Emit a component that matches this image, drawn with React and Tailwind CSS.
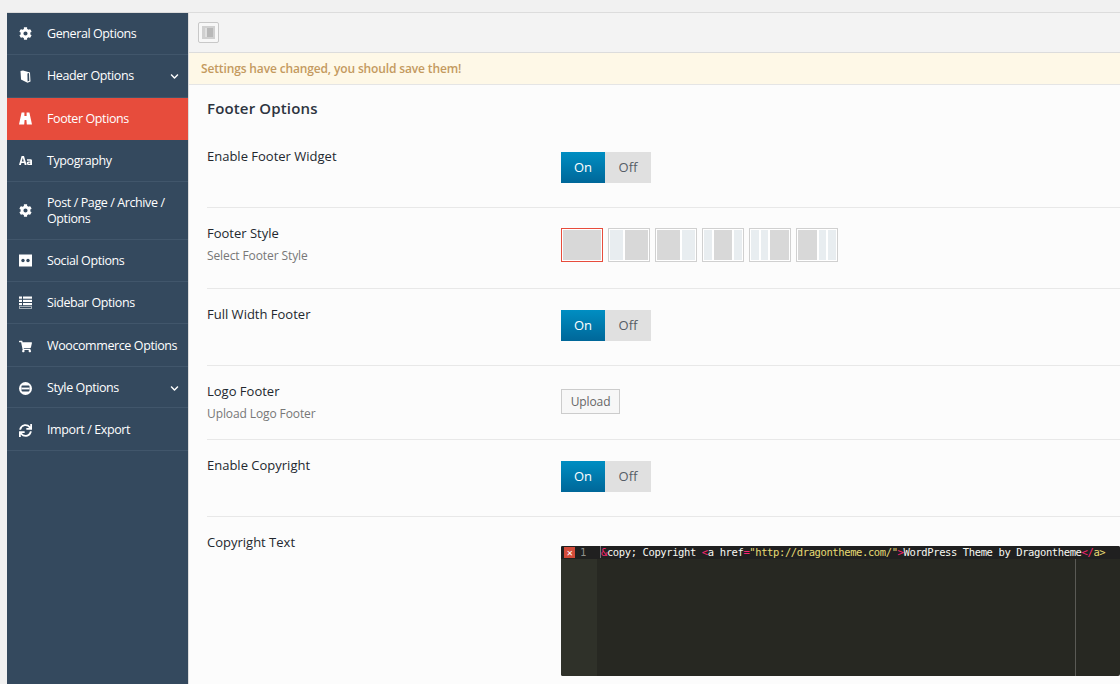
import React from 'react';
import { FaCog, FaShoppingCart, FaSync, FaChevronDown } from 'react-icons/fa';

const BookIcon = ({ className }) => (
    <svg viewBox="0 0 13 13" className={className} fill="currentColor">
        <path d="M1.5 1 L4 0.5 L11 2.5 L11.5 11.5 L8.5 12.8 L2 9.5 Z" />
        <path d="M8.4 3.6 L10 3.1 L10.3 10.8 L8.6 11.5 Z" fill="#34495e" />
    </svg>
);

const BinocularsIcon = ({ className }) => (
    <svg viewBox="0 0 13 13" className={className} fill="currentColor">
        <path d="M2.6 0.5 H5.4 V4 H7.6 V0.5 H10.4 L13 12.5 H7.8 L7.4 8 H5.6 L5.2 12.5 H0 Z" />
    </svg>
);

const TextSizeIcon = ({ className }) => (
    <svg viewBox="0 0 13 13" className={className} fill="currentColor">
        <path d="M2.6 2 H5 L7.6 11 H5.7 L5.2 9 H2.4 L1.9 11 H0 Z M2.8 7.4 H4.8 L3.8 3.8 Z" />
        <path fillRule="evenodd" d="M8 5.2 H11.6 Q13 5.2 13 6.6 V11 H9.4 Q7.6 11 7.6 9.3 Q7.6 7.6 9.4 7.6 H11.2 V6.8 H8 Z M9.4 9.2 Q9.4 9.8 10 9.8 H11.2 V8.8 H10 Q9.4 8.8 9.4 9.2 Z" />
    </svg>
);

const SocialIcon = ({ className }) => (
    <svg viewBox="0 0 13 13" className={className}>
        <rect x="0" y="0.5" width="13" height="12" fill="#fff" />
        <circle cx="4" cy="6.5" r="1.7" fill="#34495e" />
        <circle cx="9" cy="6.5" r="1.7" fill="#34495e" />
    </svg>
);

const ListIcon = ({ className }) => (
    <svg viewBox="0 0 13 13" className={className} fill="currentColor">
        <rect x="0" y="0.5" width="3" height="2.2" />
        <rect x="4" y="0.5" width="9" height="2.2" />
        <rect x="0" y="3.8" width="3" height="2.2" />
        <rect x="4" y="3.8" width="9" height="2.2" />
        <rect x="0" y="7" width="3" height="2.2" />
        <rect x="4" y="7" width="9" height="2.2" />
        <rect x="0.5" y="10.5" width="12" height="2" fill="none" stroke="#fff" strokeOpacity="0.55" />
    </svg>
);

const RingIcon = ({ className }) => (
    <svg viewBox="0 0 13 13" className={className}>
        <circle cx="6.5" cy="6.5" r="6.5" fill="#fff" />
        <rect x="2.5" y="3.6" width="8" height="5.8" rx="0.8" fill="#34495e" />
        <rect x="2.5" y="5.6" width="8" height="1.8" fill="#fff" />
    </svg>
);

const menu = [
    { label: 'General Options', icon: FaCog, row: 'h-[42px]' },
    { label: 'Header Options', icon: BookIcon, arrow: true, row: 'h-[43px]' },
    { label: 'Footer Options', icon: BinocularsIcon, active: true, row: 'h-[42px]' },
    { label: 'Typography', icon: TextSizeIcon, row: 'h-[42px]' },
    { label: 'Post / Page / Archive / Options', icon: FaCog, row: 'h-[58px]' },
    { label: 'Social Options', icon: SocialIcon, row: 'h-[42px]' },
    { label: 'Sidebar Options', icon: ListIcon, row: 'h-[42px]' },
    { label: 'Woocommerce Options', icon: FaShoppingCart, row: 'h-[43px] pt-[2px]' },
    { label: 'Style Options', icon: RingIcon, arrow: true, row: 'h-[41px] pt-[2px]' },
    { label: 'Import / Export', icon: FaSync, row: 'h-[43px] pt-[2px]' },
];

const Toggle = () => (
    <div className="flex w-[90px] h-[31px] text-[13px] leading-[31px] text-center">
        <div className="w-[44px] text-white bg-gradient-to-b from-[#008ec2] to-[#006799]">On</div>
        <div className="w-[46px] text-[#555d66] bg-[#e0e0e0]">Off</div>
    </div>
);

const titleClass = 'text-[13px] leading-[18px] font-medium text-[#23282f]';

const Row = ({ title, desc, h, children }) => (
    <div className={`flex border-b border-[#e8e8e8] pt-[16px] ${h}`}>
        <div className="w-[354px] shrink-0">
            <div className={titleClass}>{title}</div>
            {desc && <div className="text-[12px] leading-[18px] mt-[5px] tracking-[-0.1px] text-[#777]">{desc}</div>}
        </div>
        <div>{children}</div>
    </div>
);

// column widths of each footer layout thumbnail, big: the dark main column
const layouts = [
    [{ w: 'w-[38px]', big: true }],
    [{ w: 'w-[13px]' }, { w: 'w-[23px]', big: true }],
    [{ w: 'w-[23px]', big: true }, { w: 'w-[13px]' }],
    [{ w: 'w-[8px]' }, { w: 'w-[18px]', big: true }, { w: 'w-[8px]' }],
    [{ w: 'w-[8px]' }, { w: 'w-[7px]' }, { w: 'w-[19px]', big: true }],
    [{ w: 'w-[19px]', big: true }, { w: 'w-[7px]' }, { w: 'w-[8px]' }],
];

const LayoutPicker = () => (
    <div className="flex gap-[5px]">
        {layouts.map((cols, i) => (
            <div
                key={i}
                className={`w-[42px] h-[34px] border p-[1px] flex gap-[2px] bg-white ${i === 0 ? 'border-[#e74c3c]' : 'border-[#d0d0d0]'}`}
            >
                {cols.map((c, j) => (
                    <div key={j} className={`${c.w} ${c.big ? 'bg-[#d8d8d8]' : 'bg-[#e8edf0]'}`} />
                ))}
            </div>
        ))}
    </div>
);

const App = () => {
    return (
        <div className="h-[684px] overflow-hidden bg-[#f1f1f1] pl-[7px] pt-[12px] font-['Open_Sans','Noto_Sans',sans-serif]">
            <div className="flex h-[672px] border-t border-[#dcdcdc]">
                {/* Sidebar */}
                <div className="w-[181px] shrink-0 bg-[#34495e] text-[12.5px] tracking-[-0.4px] text-white">
                    {menu.map((item) => (
                        <div
                            key={item.label}
                            className={`flex items-center border-b pl-[12px] pr-[9px] ${item.row} ${item.active ? 'bg-[#e74c3c] border-[#e74c3c]' : 'border-[#41566b]'}`}
                        >
                            <span className="w-[28px] shrink-0 flex">
                                <item.icon className="w-[13px] h-[13px]" />
                            </span>
                            <span className="leading-[16px] flex-1">{item.label}</span>
                            {item.arrow && <FaChevronDown className="w-[9px] h-[9px]" />}
                        </div>
                    ))}
                </div>

                {/* Main */}
                <div className="flex-1 min-w-0 border-l border-[#dcdcdc] bg-[#fcfcfc]">
                    <div className="h-[40px] bg-[#f3f3f3] border-b border-[#dcdcdc] flex items-center pl-[9px]">
                        <div className="w-[21px] h-[21px] rounded-[2px] border border-[#c8c8c8] bg-[#f7f7f7] flex items-center justify-center">
                            <div className="w-[13px] h-[13px] bg-[#d0d0d0] flex items-center justify-center">
                                <div className="w-[8px] h-[9px] bg-[#b8b8b8] border-l-2 border-[#e0e0e0]" />
                            </div>
                        </div>
                    </div>
                    <div className="h-[32px] bg-[#fef8e7] border-b border-[#e5e5e5] pl-[12px] text-[12px] leading-[31px] tracking-[-0.14px] font-semibold text-[#c49a5f]">
                        Settings have changed, you should save them!
                    </div>
                    <div className="pl-[18px]">
                        <h2 className="pt-[13px] h-[46px] text-[15px] leading-[20px] tracking-[0.15px] font-semibold text-[#2d3440]">Footer Options</h2>
                        <Row title="Enable Footer Widget" h="h-[77px]"><div className="pt-[5px]"><Toggle /></div></Row>
                        <Row title="Footer Style" desc="Select Footer Style" h="h-[81px]"><div className="pt-[4px]"><LayoutPicker /></div></Row>
                        <Row title="Full Width Footer" h="h-[77px]"><div className="pt-[5px]"><Toggle /></div></Row>
                        <Row title="Logo Footer" desc="Upload Logo Footer" h="h-[74px]">
                            <div className="pt-[7px]">
                                <div className="w-[59px] h-[25px] border border-[#ccc] bg-[#f7f7f7] text-[12px] tracking-[-0.1px] leading-[23px] text-center text-[#666]">Upload</div>
                            </div>
                        </Row>
                        <Row title="Enable Copyright" h="h-[77px]"><div className="pt-[5px]"><Toggle /></div></Row>
                        <div className="flex pt-[16px]">
                            <div className={`w-[354px] shrink-0 ${titleClass}`}>Copyright Text</div>
                            <div className="flex-1 min-w-0 mt-[13px]">
                                <div className="h-[130px] flex bg-[#272822] rounded-[2px] overflow-hidden font-['DejaVu_Sans_Mono',monospace] text-[10.5px] leading-[13px] tracking-[-0.39px]">
                                    <div className="w-[36px] shrink-0 bg-[#2f3129] text-[#8f908a]">
                                        <div className="h-[13px] bg-[#202020] flex items-center pl-[3px] gap-[5px]">
                                            <span className="w-[11px] h-[11px] bg-[#d24b3a] text-white text-[10px] leading-[11px] text-center font-bold">✕</span>
                                            <span>1</span>
                                        </div>
                                    </div>
                                    <div className="flex-1 min-w-0 relative">
                                        <div className="h-[13px] bg-[#202020] pl-[3px] whitespace-nowrap text-[#f8f8f2]">
                                            <span className="border-l border-[#777] text-[#f92672]">&amp;</span>copy; Copyright <span className="text-[#f92672]">&lt;</span>a href<span className="text-[#f92672]">=</span><span className="text-[#e6db74]">"http://dragontheme.com/"</span><span className="text-[#f92672]">&gt;</span>WordPress Theme by Dragontheme<span className="text-[#f92672]">&lt;/</span><span className="text-[#e6db74]">a&gt;</span>
                                        </div>
                                        <div className="absolute left-[478px] top-[13px] bottom-0 w-px bg-[#5a5a55]" />
                                    </div>
                                </div>
                            </div>
                        </div>
                    </div>
                </div>
            </div>
        </div>
    );
};

export default App;
